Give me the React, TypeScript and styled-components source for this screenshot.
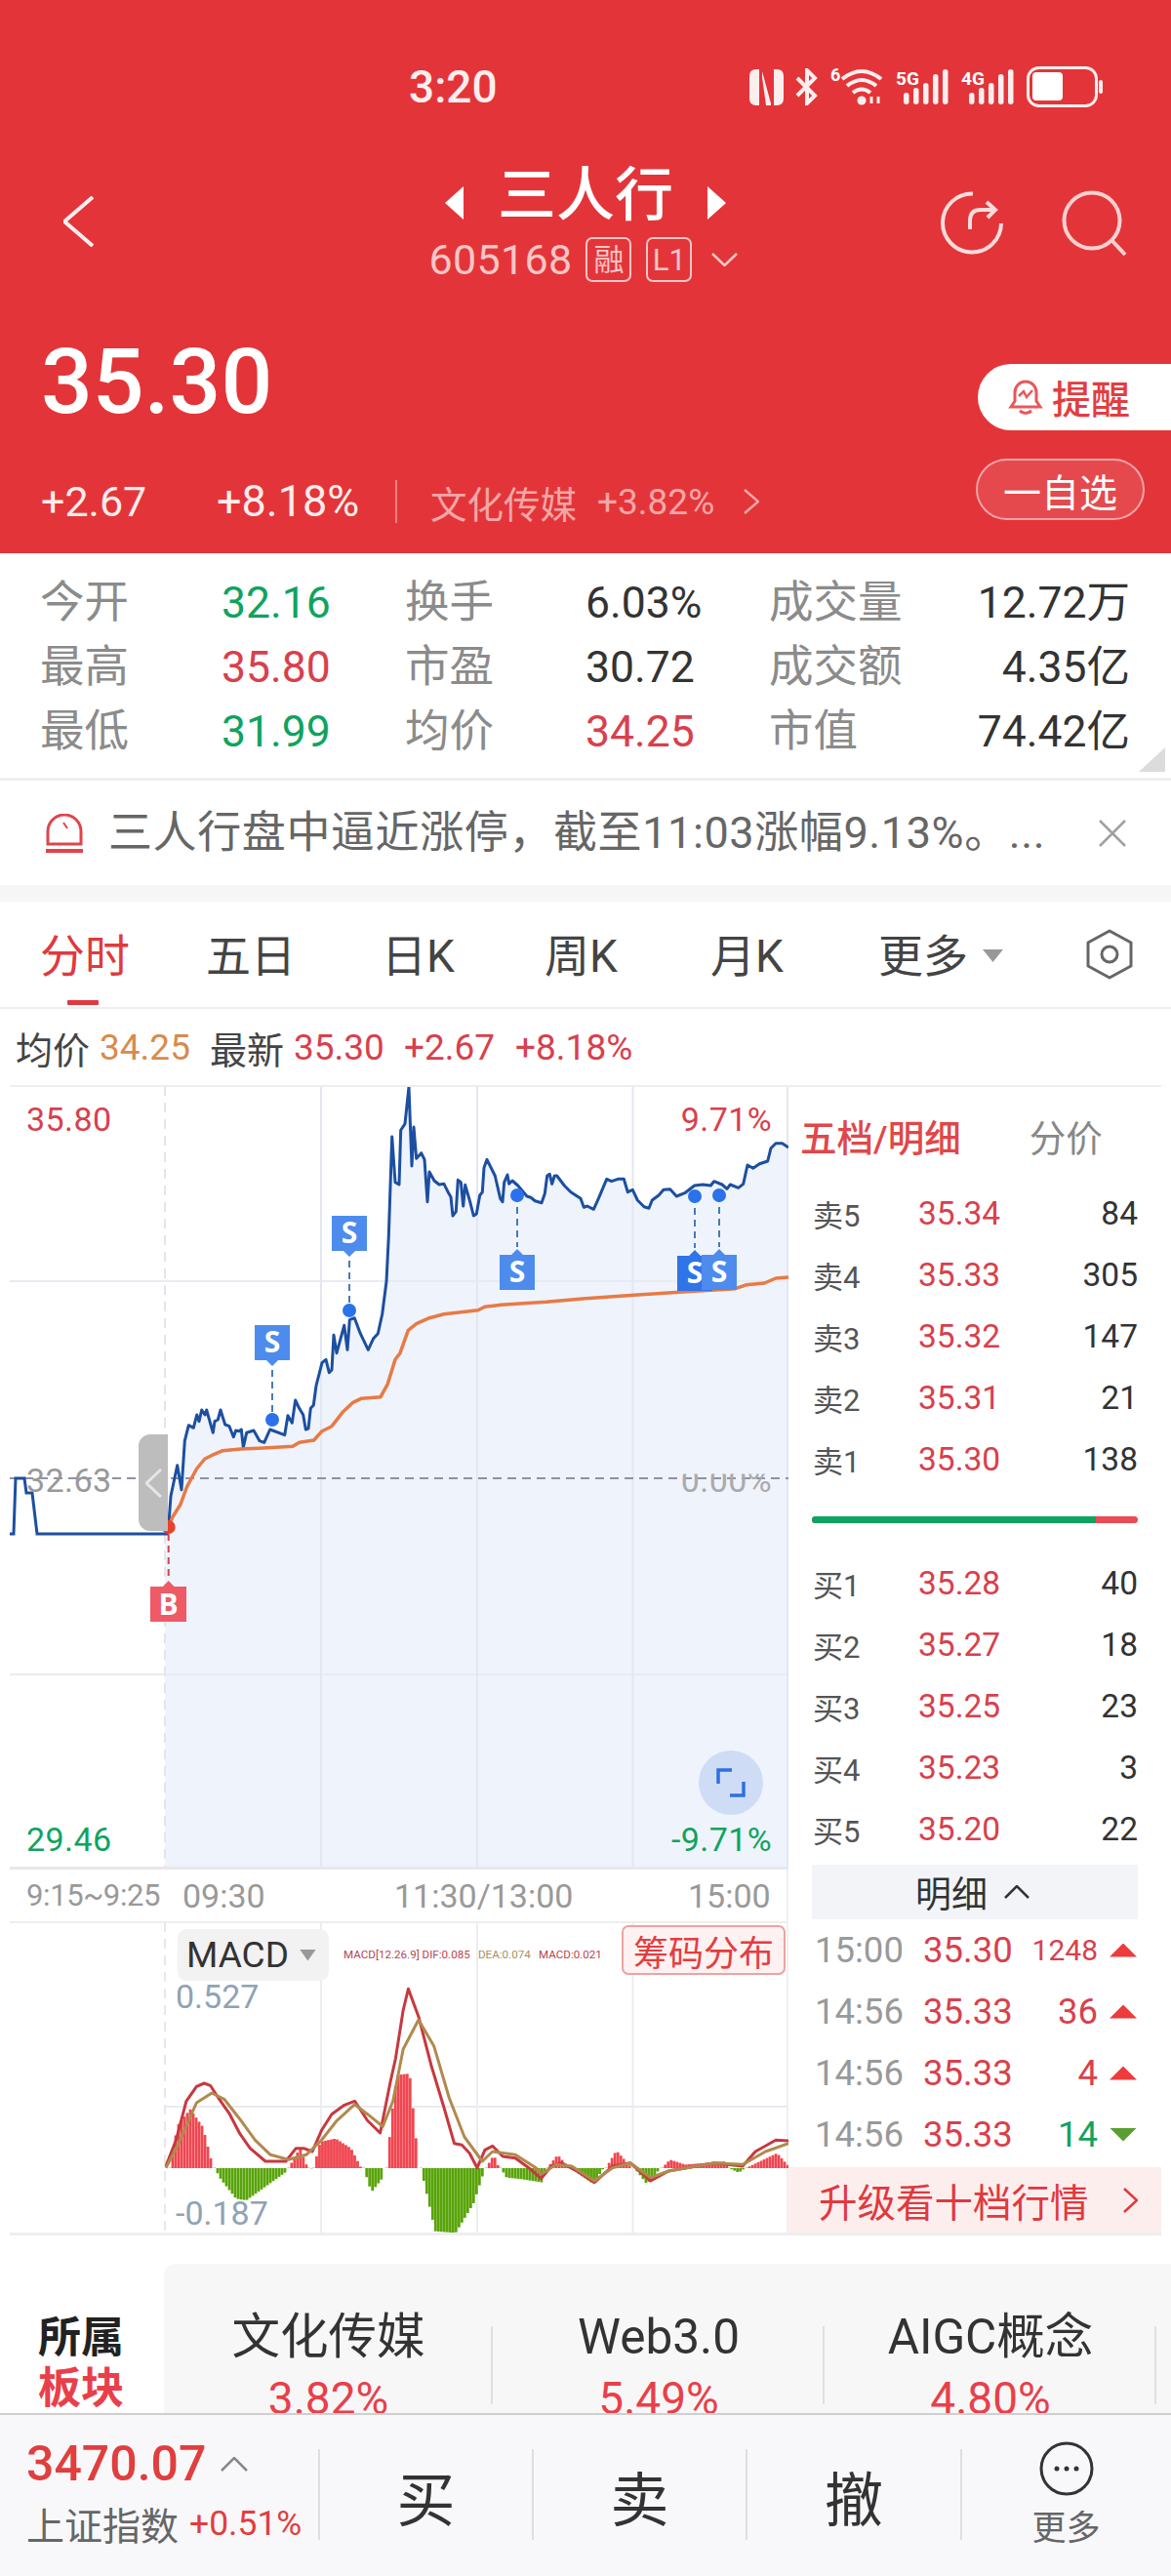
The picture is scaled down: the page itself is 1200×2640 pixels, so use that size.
import React from "react";
import styled, { createGlobalStyle } from "styled-components";

const FONT = `Roboto, "Noto Sans CJK SC", "Noto Sans", sans-serif`;
const RED = "#e0393e";
const TEXTRED = "#d8404c";
const GREEN = "#0fa35f";

const Global = createGlobalStyle`
  html, body { margin: 0; padding: 0; background: #fff; }
  * { box-sizing: border-box; }
`;

const Page = styled.div`
  width: 1200px; height: 2640px; overflow: hidden; background: #fff;
  display: flex; flex-direction: column; font-family: ${FONT}; color: #333;
`;

/* ---------- header ---------- */
const Header = styled.header`
  height: 567px; flex: none; background: #e33539; color: #fff; display: flex; flex-direction: column;
`;
const StatusBar = styled.div`
  height: 50px; margin-top: 64px; display: flex; align-items: center; padding: 0 70px 0 419px;
`;
const Clock = styled.div`font-size: 46px; line-height: 50px; font-weight: 500; color: #fdeeee;`;
const StatusIcons = styled.div`margin-left: auto; display: flex; align-items: center; gap: 12px;`;
const NavRow = styled.div`
  height: 226px; flex: none; display: grid; grid-template-columns: 1fr auto 1fr; align-items: center;
`;
const NavLeft = styled.div`padding-left: 65px; display: flex; align-items: center;`;
const NavRight = styled.div`padding: 3px 44px 0 0; display: flex; justify-content: flex-end; align-items: center; gap: 59px;`;
const NavCenter = styled.div`display: flex; flex-direction: column; align-items: center; padding-top: 5px;`;
const TitleRow = styled.div`display: flex; align-items: center; height: 70px; margin-top: -2px;`;
const Title = styled.h1`margin: 0 35px; font-size: 60px; line-height: 70px; font-weight: 500;`;
const Caret = styled.div<{ $dir: "l" | "r" }>`
  width: 19px; height: 34px; margin-top: 14px; background: #fff;
  clip-path: ${(p) => (p.$dir === "l" ? "polygon(100% 0, 100% 100%, 0 50%)" : "polygon(0 0, 100% 50%, 0 100%)")};
`;
const CodeRow = styled.div`display: flex; align-items: center; height: 50px; margin-top: 5px; margin-left: -4px; color: #f7c6c6;`;
const Code = styled.span`font-size: 43px; line-height: 50px; letter-spacing: .3px;`;
const Badge = styled.span<{ $ml: number }>`
  width: 47px; height: 46px; margin-left: ${(p) => p.$ml}px; border: 2px solid #f7c6c6; border-radius: 7px;
  display: flex; align-items: center; justify-content: center; font-size: 31px; line-height: 1;
`;
const ChevronSlot = styled.span`margin-left: 20px; display: flex;`;
const PriceArea = styled.div`flex: 1; display: flex; justify-content: space-between;`;
const PriceLeft = styled.div`padding-left: 42px; display: flex; flex-direction: column;`;
const BigPrice = styled.div`font-size: 93px; line-height: 100px; font-weight: 500; margin-top: 2px;`;
const SubRow = styled.div`margin-top: 47px; height: 50px; display: flex; align-items: center;`;
const SubVal = styled.span<{ $w: number; $fs?: number }>`
  width: ${(p) => p.$w}px; font-size: ${(p) => p.$fs || 43}px; line-height: 50px; color: #fdecec;
`;
const SubDivider = styled.span`width: 2px; height: 44px; background: #ee7f80; margin-right: 34px;`;
const SubLabel = styled.span`font-size: 37.5px; color: #f3a6a6; margin-right: 21px;`;
const SubPct = styled.span`font-size: 37px; color: #f3a6a6; margin-right: 30px;`;
const PriceRight = styled.div`display: flex; flex-direction: column; align-items: flex-end;`;
const RemindBtn = styled.div`
  margin-top: 33px; width: 198px; height: 68px; background: #fff; border-radius: 34px 0 0 34px; color: #e33d40;
  display: flex; align-items: center; padding-left: 31px; gap: 9px; font-size: 40px; font-weight: 500;
`;
const FavBtn = styled.div`
  margin-top: 29px; margin-right: 27px; width: 173px; height: 63px; border-radius: 32px;
  border: 2px solid rgba(255,255,255,.5); background: rgba(255,255,255,.1); color: #fff;
  display: flex; align-items: center; justify-content: center; font-size: 39px;
`;

/* ---------- stats ---------- */
const Stats = styled.section`
  position: relative; height: 233px; flex: none; padding-top: 18px; border-bottom: 3px solid #f0f0f0;
  &::after {
    content: ""; position: absolute; right: 6px; bottom: 6px; width: 27px; height: 25px; background: #dcdcdc;
    clip-path: polygon(100% 0, 100% 100%, 0 100%);
  }
`;
const StatRow = styled.div`
  height: 66px; padding: 0 42px 0 41px; display: grid; align-items: center;
  grid-template-columns: 186px 188px 185px 188px 1fr auto;
`;
const StatLabel = styled.span`font-size: 45.5px; line-height: 66px; color: #8b8b8b;`;
const StatVal = styled.span<{ $c?: string }>`font-size: 44.5px; line-height: 66px; color: ${(p) => p.$c || "#333"};`;

/* ---------- notice ---------- */
const Notice = styled.div`
  height: 107px; flex: none; display: flex; align-items: center; padding: 0 45px 0 46px;
`;
const NoticeText = styled.div`margin-left: 25px; flex: 1; font-size: 45px; line-height: 60px; color: #666; white-space: nowrap; letter-spacing: .6px;`;
const Band = styled.div`height: 17px; flex: none; background: #f6f6f6;`;

/* ---------- tabs ---------- */
const Tabs = styled.nav`
  height: 110px; flex: none; display: grid; align-items: center; border-bottom: 2px solid #eee; padding: 0 39px 0 41px;
  grid-template-columns: 170px 180px 167px 170px 172px 1fr auto;
`;
const Tab = styled.div<{ $on?: boolean }>`
  position: relative; font-size: 46px; line-height: 60px; color: ${(p) => (p.$on ? RED : "#444")};
  display: flex; align-items: center; padding-top: 3px;
  ${(p) => p.$on && `&::after { content: ""; position: absolute; left: 28px; width: 32px; height: 5px; top: 78px; background: ${RED}; border-radius: 1px; }`}
`;
const TabCaret = styled.span`
  width: 21px; height: 13px; margin-left: 15px; background: #999; clip-path: polygon(0 0, 100% 0, 50% 100%);
`;

/* ---------- info ---------- */
const InfoLine = styled.div`
  height: 78px; flex: none; padding-left: 16px; display: flex; align-items: center; font-size: 38px; color: #444;
`;
const InfoVal = styled.span<{ $c: string; $ml: number }>`color: ${(p) => p.$c}; margin-left: ${(p) => p.$ml}px; font-size: 37px;`;
const InfoZh = styled.span<{ $ml?: number }>`margin-left: ${(p) => p.$ml || 0}px;`;

/* ---------- body ---------- */
const Body = styled.div`
  margin: 0 10px; height: 1179px; flex: none; display: flex; border-top: 2px solid #eee; border-bottom: 3px solid #eee;
`;
const LeftCol = styled.div`width: 798px; flex: none; display: flex; flex-direction: column;`;
const ChartBox = styled.div`position: relative; height: 802px; flex: none; border-bottom: 3px solid #e8e8ec;`;
const ChartSvg = styled.svg`display: block;`;
const ChartLabel = styled.span<{ $c: string; $x?: number; $r?: number; $y: number }>`
  position: absolute; top: ${(p) => p.$y}px; font-size: 34px; line-height: 40px; letter-spacing: .4px; color: ${(p) => p.$c};
  ${(p) => (p.$x !== undefined ? `left: ${p.$x}px;` : "")}
  ${(p) => (p.$r !== undefined ? `right: ${p.$r}px;` : "")}
`;
const GhostLabel = styled(ChartLabel)`clip-path: inset(34% 0 0 0);`;
const Handle = styled.div`
  position: absolute; left: 132px; top: 356px; width: 30px; height: 99px; background: #bdbdbd; border-radius: 12px 0 0 12px;
  display: flex; align-items: center; justify-content: center;
`;
const ExpandBtn = styled.div`
  position: absolute; left: 706px; top: 680px; width: 66px; height: 66px; border-radius: 50%; background: #cfdcf5;
  display: flex; align-items: center; justify-content: center;
`;
const TimeAxis = styled.div`
  height: 55px; flex: none; border-bottom: 2px solid #eee; display: grid; align-items: center;
  padding-left: 17px; grid-template-columns: 160px 217px 301px 1fr; font-size: 34px; color: #999;
`;
const PreTime = styled.span`font-size: 31px; letter-spacing: -.4px;`;
const MacdBox = styled.div`position: relative; flex: 1;`;
const MacdPill = styled.div`
  position: absolute; left: 172px; top: 6px; width: 155px; height: 53px; background: #f2f2f2; border-radius: 9px;
  display: flex; align-items: center; padding-left: 9px; font-size: 37px; color: #333;
`;
const PillCaret = styled.span`width: 17px; height: 12px; margin-left: 11px; background: #999; clip-path: polygon(0 0, 100% 0, 50% 100%);`;
const MacdInfo = styled.span<{ $c: string; $x: number }>`
  position: absolute; left: ${(p) => p.$x}px; top: 22px; font-size: 11.6px; line-height: 20px; white-space: nowrap; color: ${(p) => p.$c};
`;
const ChipBtn = styled.div`
  position: absolute; left: 627px; top: 2px; width: 168px; height: 51px; border: 2px solid #eba3a3; background: #fdf1f1; border-radius: 7px;
  display: flex; align-items: center; justify-content: center; font-size: 36px; color: #e33d40;
`;
const MacdScale = styled.span<{ $y: number }>`
  position: absolute; left: 170px; top: ${(p) => p.$y}px; font-size: 34px; line-height: 40px; color: #8fa3b5;
`;

/* ---------- right panel ---------- */
const RightCol = styled.div`flex: 1; display: flex; flex-direction: column; border-left: 2px solid #f0f0f0; margin-left: -2px; min-width: 0;`;
const PanelHead = styled.div`height: 98px; flex: none; display: flex; align-items: center; padding-left: 12px;`;
const PanelTab = styled.span<{ $on?: boolean }>`
  font-size: 37.5px; color: ${(p) => (p.$on ? "#e0474a" : "#888")}; font-weight: ${(p) => (p.$on ? 500 : 400)};
  margin-left: ${(p) => (p.$on ? 0 : 70)}px;
`;
const QuoteRow = styled.div`
  height: 63px; flex: none; padding: 0 24px 0 25px; display: grid; grid-template-columns: 108px 1fr auto; align-items: center;
`;
const QuoteLabel = styled.span`font-size: 31px; color: #555;`;
const QuotePrice = styled.span`font-size: 33.5px; color: ${TEXTRED};`;
const QuoteQty = styled.span`font-size: 33.5px; color: #333;`;
const Ratio = styled.div`margin: 27px 24px 30px 24px; height: 7px; flex: none; border-radius: 4px; overflow: hidden; display: flex; background: #ea4b55;`;
const RatioFill = styled.div`background: ${GREEN}; height: 100%;`;
const DetailBar = styled.div`
  margin: 5px 24px 0 24px; height: 56px; flex: none; background: #f2f4f8; display: flex; align-items: center; padding-left: 106px;
  font-size: 37px; color: #333; gap: 17px;
`;
const DetailRow = styled.div`
  height: 63px; flex: none; padding: 0 25px 0 27px; display: grid; grid-template-columns: 111px 100px 1fr 40px; align-items: center;
`;
const DetailTime = styled.span`font-size: 36.5px; color: #999;`;
const DetailPrice = styled.span`font-size: 36.5px; color: ${TEXTRED};`;
const DetailQty = styled.span<{ $c: string; $small?: boolean }>`
  font-size: ${(p) => (p.$small ? 30 : 36.5)}px; color: ${(p) => p.$c}; text-align: right;
`;
const Arrow = styled.span<{ $up: boolean }>`
  justify-self: end; width: 28px; height: 14px; background: ${(p) => (p.$up ? "#ee3b3b" : "#5a9e32")};
  clip-path: ${(p) => (p.$up ? "polygon(50% 0, 100% 100%, 0 100%)" : "polygon(0 0, 100% 0, 50% 100%)")};
`;
const Upgrade = styled.div`
  margin-top: 2px; height: 67px; flex: none; background: #fdeeee; display: flex; align-items: center; padding: 0 24px 0 31px;
  justify-content: space-between; font-size: 39.5px; color: #e0393e;
`;

/* ---------- sector ---------- */
const Sector = styled.section`
  margin-top: 29px; height: 153px; flex: none; display: flex; overflow: hidden;
`;
const SectorTag = styled.div`
  width: 168px; flex: none; padding: 50px 0 0 39px; font-size: 44px; line-height: 52px; font-weight: 700; color: #222;
`;
const SectorTagRed = styled.div`color: #e8404a;`;
const SectorCard = styled.div`
  flex: 1; background: #f7f7f8; border-radius: 12px 0 0 0; display: grid; grid-template-columns: 337px 340px 340px 1fr;
`;
const SectorCell = styled.div`
  position: relative; text-align: center; padding-top: 45px;
  &::after { content: ""; position: absolute; right: 0; top: 64px; height: 80px; width: 2px; background: #e0e0e0; }
`;
const SectorName = styled.div`font-size: 49.5px; line-height: 60px; color: #333;`;
const SectorPct = styled.div`font-size: 46px; line-height: 56px; margin-top: 5px; color: #e8404a;`;

/* ---------- bottom bar ---------- */
const BottomBar = styled.footer`
  height: 167px; flex: none; background: #f8f8fa; border-top: 2px solid #cfcfcf;
  display: grid; grid-template-columns: 327px 219px 219px 220px 1fr;
`;
const IndexCell = styled.div`padding: 20px 0 0 27px; position: relative;`;
const IndexTop = styled.div`display: flex; align-items: center; height: 60px; font-size: 50px; font-weight: 500; color: #e13e3e;`;
const IndexChevron = styled.span`margin-left: 15px; display: flex;`;
const IndexBottom = styled.div`display: flex; align-items: center; height: 62px; font-size: 39px; color: #666;`;
const IndexPct = styled.span`font-size: 35.5px; color: #e13e3e; margin-left: 11px;`;
const TradeCell = styled.div`
  position: relative; display: flex; align-items: center; justify-content: center; font-size: 60px; color: #333; padding-top: 0;
  &::before { content: ""; position: absolute; left: -1px; top: 35px; height: 93px; width: 2px; background: #dedede; }
`;
const MoreCell = styled(TradeCell)`
  flex-direction: column; justify-content: flex-start; padding: 26px 0 0 0; font-size: 35px; color: #666; gap: 11px;
`;
const MoreText = styled.span`line-height: 44px;`;

/* ---------- data ---------- */
type P = [number, number];
const z9 = (a: P[]): P[] => a.map(([x, y]) => [160 + x / 3, 1100 + y / 3]);
const z10 = (a: P[]): P[] => a.map(([x, y]) => [400 + x / 3, 1100 + y / 3]);
const z5 = (a: P[]): P[] => a.map(([x, y]) => [x / 1.912, 1900 + y / 3]);
const toPath = (a: P[]) => "M" + a.map(([x, y]) => `${x.toFixed(1)} ${y.toFixed(1)}`).join("L");

const pre: P[] = [[10, 1572], [14, 1572], [16, 1515], [25, 1515], [27, 1530], [33, 1530], [38, 1572], [172.7, 1572]];
const blue: P[] = [
  ...z9([[38, 1395], [45, 1300], [65, 1205], [78, 1280], [88, 1130], [100, 1082], [115, 1090], [125, 1050], [132, 1070], [140, 1035], [150, 1050], [155, 1035], [175, 1105], [180, 1070], [190, 1065], [198, 1035], [212, 1080], [225, 1085], [238, 1118], [245, 1098], [255, 1100], [262, 1095], [268, 1150], [278, 1105], [300, 1098], [318, 1130], [332, 1135], [350, 1095], [395, 1112], [405, 1052], [418, 1075], [428, 1005], [440, 1030], [452, 1050], [460, 1095], [468, 1092], [475, 1030], [484, 1020], [492, 960], [510, 890], [522, 880], [532, 920], [540, 912], [546, 805], [555, 860], [578, 775], [588, 850], [595, 758], [610, 752], [628, 800], [652, 850], [668, 815], [682, 800], [695, 740], [708, 640], [715, 500], [725, 195], [735, 335], [747, 342], [752, 175], [765, 155], [777, 42], [786, 285], [792, 165], [800, 262], [815, 245], [825, 265], [834, 395], [840, 303], [855, 330], [870, 342], [885, 340], [900, 370], [906, 380], [912, 438], [922, 425], [928, 328], [937, 335], [944, 408], [950, 343], [965, 395], [976, 438], [985, 432], [995, 375], [1003, 365], [1008, 290], [1017, 265], [1042, 315], [1058, 385], [1065, 395], [1070, 335], [1080, 312], [1085, 340], [1095, 330], [1112, 345]]),
  ...z10([[420, 378], [432, 382], [445, 392], [465, 398], [475, 370], [482, 315], [490, 310], [497, 340], [505, 315], [512, 315], [535, 345], [555, 365], [585, 385], [595, 412], [605, 408], [625, 418], [640, 385], [665, 325], [680, 332], [700, 325], [718, 325], [730, 365], [745, 358], [760, 390], [780, 410], [795, 415], [805, 390], [825, 375], [840, 358], [860, 356], [880, 378], [905, 368], [935, 345], [960, 342], [985, 345], [995, 332], [1020, 342], [1035, 355], [1045, 342], [1070, 352], [1085, 340], [1098, 282], [1115, 292], [1135, 278], [1160, 270], [1170, 230], [1185, 215], [1205, 215], [1224, 228]]),
];
const avg: P[] = [
  ...z9([[38, 1395], [50, 1365], [75, 1325], [95, 1270], [125, 1215], [150, 1185], [170, 1175], [205, 1160], [260, 1155], [330, 1152], [420, 1147], [440, 1135], [485, 1128], [510, 1100], [540, 1085], [575, 1040], [605, 1012], [630, 1000], [690, 995], [712, 955], [735, 880], [750, 860], [775, 790], [800, 770], [840, 752], [885, 740], [990, 728], [1010, 718], [1060, 712], [1200, 703]]),
  ...z10([[600, 692], [750, 682], [900, 672], [1060, 662], [1095, 650], [1150, 645], [1185, 630], [1224, 627]]),
];
const fillPath = toPath([[169, 1915], [169, 1572], ...blue, [808, 1915]]) + "Z";

const dif = z5([[325, 960], [345, 880], [365, 760], [385, 715], [400, 705], [412, 712], [430, 755], [450, 800], [470, 860], [490, 905], [520, 945], [560, 945], [580, 905], [595, 905], [612, 915], [630, 850], [650, 800], [675, 772], [695, 760], [720, 820], [745, 858], [765, 700], [775, 630], [790, 480], [800, 415], [820, 500], [845, 650], [870, 780], [890, 890], [905, 895], [920, 920], [935, 965], [950, 910], [965, 898], [985, 930], [1010, 935], [1040, 970], [1060, 998], [1080, 960], [1100, 950], [1130, 975], [1165, 1010], [1200, 960], [1235, 950], [1275, 1005], [1310, 975], [1400, 950], [1455, 960], [1480, 915], [1520, 880], [1545, 882]]);
const dea = z5([[325, 965], [350, 890], [385, 765], [415, 735], [440, 755], [470, 815], [500, 880], [530, 925], [565, 940], [600, 925], [630, 880], [660, 820], [695, 770], [720, 800], [750, 838], [770, 760], [790, 600], [820, 510], [850, 590], [880, 750], [910, 870], [945, 945], [965, 915], [1010, 925], [1050, 965], [1060, 985], [1090, 955], [1120, 960], [1165, 1005], [1200, 965], [1235, 950], [1275, 995], [1310, 975], [1400, 950], [1455, 955], [1500, 915], [1545, 890]]);

const segs: { r: boolean; p: P[] }[] = [
  { r: true, p: [[330, 965], [345, 835], [370, 785], [395, 840], [415, 965]] },
  { r: false, p: [[418, 965], [430, 1000], [460, 1060], [480, 1065], [520, 1020], [560, 975]] },
  { r: true, p: [[563, 965], [585, 905], [600, 965]] },
  { r: false, p: [[602, 965], [606, 980], [608, 965]] },
  { r: true, p: [[612, 965], [625, 885], [655, 875], [685, 905], [705, 965]] },
  { r: false, p: [[710, 965], [725, 1040], [745, 1000], [750, 965]] },
  { r: true, p: [[755, 965], [765, 800], [775, 680], [800, 675], [818, 965]] },
  { r: false, p: [[822, 965], [850, 1160], [890, 1165], [925, 1075], [948, 965]] },
  { r: true, p: [[950, 965], [965, 925], [975, 965]] },
  { r: false, p: [[978, 965], [990, 995], [1020, 1000], [1060, 1010], [1068, 965]] },
  { r: true, p: [[1070, 965], [1090, 925], [1112, 965]] },
  { r: false, p: [[1115, 965], [1160, 1015], [1180, 965]] },
  { r: true, p: [[1185, 965], [1205, 912], [1235, 965]] },
  { r: false, p: [[1240, 965], [1265, 1015], [1292, 965]] },
  { r: true, p: [[1295, 965], [1310, 940], [1340, 955], [1420, 945], [1425, 965]] },
  { r: false, p: [[1425, 965], [1445, 980], [1458, 965]] },
  { r: true, p: [[1460, 965], [1520, 920], [1545, 965]] },
];
const bars = segs.flatMap((s, si) => {
  const pts = z5(s.p);
  const out: React.ReactElement[] = [];
  let n = 0;
  for (let x = pts[0][0]; x <= pts[pts.length - 1][0]; x += 3, n++) {
    let i = 0;
    while (i < pts.length - 2 && pts[i + 1][0] < x) i++;
    const [x0, y0] = pts[i];
    const [x1, y1] = pts[i + 1];
    const y = y0 + ((y1 - y0) * (x - x0)) / (x1 - x0 || 1);
    const base = 2222;
    out.push(
      <rect key={`${si}-${n}`} x={x} y={Math.min(y, base)} width={2.8} height={Math.abs(y - base)} fill={s.r ? "#f04650" : "#58a40a"} />
    );
  }
  return out;
});

const Marker = ({ x, y, up, dotY, c, letter = "S", dash = "#4a7ab5" }: { x: number; y: number; up: boolean; dotY: number; c: string; letter?: string; dash?: string }) => {
  const l = x - 18, r = x + 18, b = y + 36;
  const d = up
    ? `M${l} ${y}H${x - 6}L${x} ${y - 6}L${x + 6} ${y}H${r}V${b}H${l}Z`
    : `M${l} ${y}H${r}V${b}H${x + 6}L${x} ${b + 6}L${x - 6} ${b}H${l}Z`;
  return (
    <g>
      <line x1={x} x2={x} y1={up ? dotY : b + 10} y2={up ? y - 8 : dotY} stroke={dash} strokeWidth={2} strokeDasharray="7 5" />
      <circle cx={x} cy={dotY} r={7} fill="#2b72ea" />
      <path d={d} fill={c} />
      <text x={x} y={y + 28} textAnchor="middle" fontFamily="'Open Sans', sans-serif" fontWeight={700} fontSize={30} fill="#fff">{letter}</text>
    </g>
  );
};

const asks: [string, string, string][] = [["卖5", "35.34", "84"], ["卖4", "35.33", "305"], ["卖3", "35.32", "147"], ["卖2", "35.31", "21"], ["卖1", "35.30", "138"]];
const bids: [string, string, string][] = [["买1", "35.28", "40"], ["买2", "35.27", "18"], ["买3", "35.25", "23"], ["买4", "35.23", "3"], ["买5", "35.20", "22"]];
const trades: { t: string; p: string; q: string; up: boolean; small?: boolean }[] = [
  { t: "15:00", p: "35.30", q: "1248", up: true, small: true },
  { t: "14:56", p: "35.33", q: "36", up: true },
  { t: "14:56", p: "35.33", q: "4", up: true },
  { t: "14:56", p: "35.33", q: "14", up: false },
];

const Chevron = ({ dir, w, h, c, sw = 3 }: { dir: "l" | "r" | "u" | "d"; w: number; h: number; c: string; sw?: number }) => {
  const pts = { l: `${w - 1} 1 1 ${h / 2} ${w - 1} ${h - 1}`, r: `1 1 ${w - 1} ${h / 2} 1 ${h - 1}`, u: `1 ${h - 1} ${w / 2} 1 ${w - 1} ${h - 1}`, d: `1 1 ${w / 2} ${h - 1} ${w - 1} 1` }[dir];
  return <svg width={w} height={h} viewBox={`0 0 ${w} ${h}`} fill="none"><polyline points={pts} stroke={c} strokeWidth={sw} /></svg>;
};

const SignalIcon = ({ label }: { label: string }) => (
  <svg width={55} height={38} viewBox="0 0 55 38">
    <text x={0} y={17} fontFamily="Roboto, sans-serif" fontWeight={700} fontSize={19} fill="#fff">{label}</text>
    {[[8, 24, 12], [18, 19, 17], [28, 14, 22], [38, 5, 31], [48, 0, 36]].map(([x, y, h]) => (
      <rect key={x} x={x} y={y + 1} width={5.5} height={h} rx={2.7} fill="#fdeeee" />
    ))}
  </svg>
);

export default function App() {
  return (
    <Page>
      <Global />
      <Header>
        <StatusBar>
          <Clock>3:20</Clock>
          <StatusIcons>
            <svg width={35} height={37} viewBox="0 0 35 37">
              <path d="M7 0H10V37H7Q0 37 0 30V7Q0 0 7 0ZM25 0H28Q35 0 35 7V30Q35 37 28 37H25ZM13 2L22 35V37H17L13 8Z" fill="#fdeeee" />
            </svg>
            <svg width={24} height={38} viewBox="0 0 24 38" fill="none">
              <path d="M2 10L20 28L12 36V2L20 10L2 28" stroke="#fdeeee" strokeWidth={4} />
            </svg>
            <svg width={55} height={40} viewBox="0 0 55 40" fill="none">
              <text x={0} y={14} fontFamily="Roboto, sans-serif" fontWeight={700} fontSize={18} fill="#fff">6</text>
              <path d="M12 12Q32 -4 52 12" stroke="#fdeeee" strokeWidth={4} />
              <path d="M17 19Q32 7 47 19" stroke="#fdeeee" strokeWidth={4} />
              <path d="M23 26Q32 19 41 26" stroke="#fdeeee" strokeWidth={4} />
              <circle cx={32} cy={34} r={4.5} fill="#fdeeee" />
              <path d="M42 37V30M49 37V30" stroke="#fdeeee" strokeWidth={3} />
            </svg>
            <SignalIcon label="5G" />
            <SignalIcon label="4G" />
            <svg width={78} height={42} viewBox="0 0 78 42" fill="none">
              <rect x={1.5} y={1.5} width={70} height={39} rx={11} stroke="#fdeeee" strokeWidth={3} />
              <rect x={6} y={6} width={31} height={29} rx={4} fill="#fff" />
              <rect x={74} y={14} width={4} height={14} rx={2} fill="#fdeeee" />
            </svg>
          </StatusIcons>
        </StatusBar>
        <NavRow>
          <NavLeft><Chevron dir="l" w={31} h={52} c="#fdeeee" sw={4} /></NavLeft>
          <NavCenter>
            <TitleRow>
              <Caret $dir="l" />
              <Title>三人行</Title>
              <Caret $dir="r" />
            </TitleRow>
            <CodeRow>
              <Code>605168</Code>
              <Badge $ml={14}>融</Badge>
              <Badge $ml={15}>L1</Badge>
              <ChevronSlot><Chevron dir="d" w={27} h={14} c="#f7c6c6" sw={2.5} /></ChevronSlot>
            </CodeRow>
          </NavCenter>
          <NavRight>
            <svg width={66} height={66} viewBox="-1 -1 66 66" fill="none" stroke="#fbdcdc" strokeWidth={4}>
              <path d="M33 1.5A30 30 0 1 0 62 32" />
              <path d="M30 38V29Q30 18 41 18H55M47 10L56 18L48 26" />
            </svg>
            <svg width={68} height={68} viewBox="0 0 68 68" fill="none" stroke="#fbd0d0" strokeWidth={4}>
              <circle cx={31} cy={31} r={28.5} />
              <path d="M52 52L65 66" />
            </svg>
          </NavRight>
        </NavRow>
        <PriceArea>
          <PriceLeft>
            <BigPrice>35.30</BigPrice>
            <SubRow>
              <SubVal $w={180}>+2.67</SubVal>
              <SubVal $w={183} $fs={45}>+8.18%</SubVal>
              <SubDivider />
              <SubLabel>文化传媒</SubLabel>
              <SubPct>+3.82%</SubPct>
              <Chevron dir="r" w={16} h={26} c="#f3a6a6" sw={2.5} />
            </SubRow>
          </PriceLeft>
          <PriceRight>
            <RemindBtn>
              <svg width={36} height={38} viewBox="0 0 36 38" fill="none" stroke="#e8585b" strokeWidth={3}>
                <path d="M3 29H33L29 23V14A11 11 0 0 0 7 14V23Z" />
                <path d="M12 33Q18 38 24 33" />
                <path d="M11 18L16 13L19 19L25 12" strokeWidth={2.5} />
              </svg>
              提醒
            </RemindBtn>
            <FavBtn>一自选</FavBtn>
          </PriceRight>
        </PriceArea>
      </Header>

      <Stats>
        <StatRow>
          <StatLabel>今开</StatLabel><StatVal $c={GREEN}>32.16</StatVal>
          <StatLabel>换手</StatLabel><StatVal>6.03%</StatVal>
          <StatLabel>成交量</StatLabel><StatVal>12.72万</StatVal>
        </StatRow>
        <StatRow>
          <StatLabel>最高</StatLabel><StatVal $c={TEXTRED}>35.80</StatVal>
          <StatLabel>市盈</StatLabel><StatVal>30.72</StatVal>
          <StatLabel>成交额</StatLabel><StatVal>4.35亿</StatVal>
        </StatRow>
        <StatRow>
          <StatLabel>最低</StatLabel><StatVal $c={GREEN}>31.99</StatVal>
          <StatLabel>均价</StatLabel><StatVal $c={TEXTRED}>34.25</StatVal>
          <StatLabel>市值</StatLabel><StatVal>74.42亿</StatVal>
        </StatRow>
      </Stats>

      <Notice>
        <svg width={40} height={40} viewBox="0 0 40 40" fill="none" stroke="#e0444a" strokeWidth={3}>
          <path d="M3 31V18A17 17 0 0 1 37 18V31Z" />
          <path d="M19 9L23 15" strokeWidth={2} />
          <path d="M1 38H39" strokeWidth={4} />
        </svg>
        <NoticeText>{"三人行盘中逼近涨停\uFF0C截至11:03涨幅9.13%。..."}</NoticeText>
        <svg width={30} height={30} viewBox="0 0 30 30" stroke="#a0a0a0" strokeWidth={2.5}><path d="M2 2L28 28M28 2L2 28" /></svg>
      </Notice>
      <Band />

      <Tabs>
        <Tab $on>分时</Tab>
        <Tab>五日</Tab>
        <Tab>日K</Tab>
        <Tab>周K</Tab>
        <Tab>月K</Tab>
        <Tab>更多<TabCaret /></Tab>
        <svg width={48} height={52} viewBox="0 0 48 52" fill="none" stroke="#666" strokeWidth={3}>
          <path d="M24 2L46 14V38L24 50L2 38V14Z" strokeLinejoin="round" />
          <circle cx={24} cy={26} r={8} />
        </svg>
      </Tabs>

      <InfoLine>
        <InfoZh>均价</InfoZh>
        <InfoVal $c="#d98a4c" $ml={10}>34.25</InfoVal>
        <InfoZh $ml={20}>最新</InfoZh>
        <InfoVal $c={TEXTRED} $ml={10}>35.30</InfoVal>
        <InfoVal $c={TEXTRED} $ml={20}>+2.67</InfoVal>
        <InfoVal $c={TEXTRED} $ml={21}>+8.18%</InfoVal>
      </InfoLine>

      <Body>
        <LeftCol>
          <ChartBox>
            <ChartSvg width={798} height={799} viewBox="10 1114 798 799" fill="none">
              <path d={fillPath} fill="#eff3fc" />
              {[1313, 1716].map((y) => <line key={y} x1={10} x2={808} y1={y} y2={y} stroke="#e8ebf2" strokeWidth={2} />)}
              {[329, 489, 648.5, 807].map((x) => <line key={x} x1={x} x2={x} y1={1113} y2={1915} stroke="#e4e7f1" strokeWidth={2} />)}
              <line x1={169} x2={169} y1={1113} y2={1915} stroke="#e4e4ea" strokeWidth={2} strokeDasharray="10 7" />
              <line x1={10} x2={808} y1={1515} y2={1515} stroke="#8e93a3" strokeWidth={2} strokeDasharray="9 6" />
              <path d={toPath(pre)} stroke="#1c4fa0" strokeWidth={3} />
              <path d={toPath(blue)} stroke="#1c4fa0" strokeWidth={3} strokeLinejoin="round" />
              <path d={toPath(avg)} stroke="#e87a45" strokeWidth={3.5} strokeLinejoin="round" />
              <Marker x={279} y={1358} up={false} dotY={1455} c="#4d8ced" />
              <Marker x={358} y={1246} up={false} dotY={1343} c="#4d8ced" />
              <Marker x={530} y={1286} up dotY={1225} c="#4d8ced" />
              <Marker x={712} y={1287} up dotY={1226} c="#2f74e8" />
              <Marker x={737} y={1286} up dotY={1225} c="#4d8ced" />
              <line x1={172.7} x2={172.7} y1={1572} y2={1618} stroke="#d8404c" strokeWidth={2} strokeDasharray="7 5" />
              <circle cx={172.7} cy={1565} r={7} fill="#e8412f" />
              <path d="M154 1626H167L172.7 1620L178.5 1626H191V1662H154Z" fill="#ee5a65" />
              <text x={172.7} y={1655} textAnchor="middle" fontFamily="'Open Sans', sans-serif" fontWeight={700} fontSize={30} fill="#fff">B</text>
            </ChartSvg>
            <ChartLabel $c={TEXTRED} $x={17} $y={13}>35.80</ChartLabel>
            <ChartLabel $c={TEXTRED} $r={17} $y={13}>9.71%</ChartLabel>
            <ChartLabel $c="#999" $x={17} $y={383}>32.63</ChartLabel>
            <GhostLabel $c="#aaa" $r={17} $y={383}>0.00%</GhostLabel>
            <ChartLabel $c={GREEN} $x={17} $y={751}>29.46</ChartLabel>
            <ChartLabel $c={GREEN} $r={17} $y={751}>-9.71%</ChartLabel>
            <Handle><Chevron dir="l" w={17} h={30} c="#e6e6e6" sw={3} /></Handle>
            <ExpandBtn>
              <svg width={30} height={30} viewBox="0 0 30 30" fill="none" stroke="#2f6fe0" strokeWidth={3.5}>
                <path d="M2 16V2H16M28 14V28H14" />
              </svg>
            </ExpandBtn>
          </ChartBox>
          <TimeAxis>
            <PreTime>9:15~9:25</PreTime>
            <span>09:30</span>
            <span>11:30/13:00</span>
            <span>15:00</span>
          </TimeAxis>
          <MacdBox>
            <ChartSvg width={798} height={317} viewBox="10 1971 798 317" fill="none">
              <line x1={169} x2={808} y1={2159} y2={2159} stroke="#e8ebf2" strokeWidth={2} />
              {[329, 489, 648.5].map((x) => <line key={x} x1={x} x2={x} y1={1970} y2={2288} stroke="#ebedf3" strokeWidth={2} />)}
              <line x1={169} x2={169} y1={1970} y2={2288} stroke="#e8e8ec" strokeWidth={2} strokeDasharray="10 7" />
              {bars}
              <path d={toPath(dif)} stroke="#c8383f" strokeWidth={3} strokeLinejoin="round" />
              <path d={toPath(dea)} stroke="#b08a4e" strokeWidth={3} strokeLinejoin="round" />
            </ChartSvg>
            <MacdPill>MACD<PillCaret /></MacdPill>
            <MacdInfo $c="#b8454f" $x={342}>MACD[12.26.9] DIF:0.085</MacdInfo>
            <MacdInfo $c="#a89060" $x={480}>DEA:0.074</MacdInfo>
            <MacdInfo $c="#b8454f" $x={542}>MACD:0.021</MacdInfo>
            <ChipBtn>筹码分布</ChipBtn>
            <MacdScale $y={55}>0.527</MacdScale>
            <MacdScale $y={277}>-0.187</MacdScale>
          </MacdBox>
        </LeftCol>
        <RightCol>
          <PanelHead>
            <PanelTab $on>五档/明细</PanelTab>
            <PanelTab>分价</PanelTab>
          </PanelHead>
          {asks.map(([a, b, c]) => <QuoteRow key={a}><QuoteLabel>{a}</QuoteLabel><QuotePrice>{b}</QuotePrice><QuoteQty>{c}</QuoteQty></QuoteRow>)}
          <Ratio><RatioFill style={{ width: "87%" }} /></Ratio>
          {bids.map(([a, b, c]) => <QuoteRow key={a}><QuoteLabel>{a}</QuoteLabel><QuotePrice>{b}</QuotePrice><QuoteQty>{c}</QuoteQty></QuoteRow>)}
          <DetailBar>明细<Chevron dir="u" w={26} h={14} c="#333" sw={2.5} /></DetailBar>
          {trades.map((t, i) => (
            <DetailRow key={i}>
              <DetailTime>{t.t}</DetailTime>
              <DetailPrice>{t.p}</DetailPrice>
              <DetailQty $c={t.up ? TEXTRED : GREEN} $small={t.small}>{t.q}</DetailQty>
              <Arrow $up={t.up} />
            </DetailRow>
          ))}
          <Upgrade>升级看十档行情<Chevron dir="r" w={15} h={26} c="#e0393e" sw={2.5} /></Upgrade>
        </RightCol>
      </Body>

      <Sector>
        <SectorTag>所属<SectorTagRed>板块</SectorTagRed></SectorTag>
        <SectorCard>
          <SectorCell><SectorName>文化传媒</SectorName><SectorPct>3.82%</SectorPct></SectorCell>
          <SectorCell><SectorName>Web3.0</SectorName><SectorPct>5.49%</SectorPct></SectorCell>
          <SectorCell><SectorName>AIGC概念</SectorName><SectorPct>4.80%</SectorPct></SectorCell>
        </SectorCard>
      </Sector>

      <BottomBar>
        <IndexCell>
          <IndexTop>3470.07<IndexChevron><Chevron dir="u" w={28} h={15} c="#888" sw={2.5} /></IndexChevron></IndexTop>
          <IndexBottom>上证指数<IndexPct>+0.51%</IndexPct></IndexBottom>
        </IndexCell>
        <TradeCell>买</TradeCell>
        <TradeCell>卖</TradeCell>
        <TradeCell>撤</TradeCell>
        <MoreCell>
          <svg width={56} height={58} viewBox="0 0 56 58" fill="none">
            <circle cx={28} cy={29} r={26} stroke="#333" strokeWidth={3} />
            <circle cx={18} cy={29} r={2.5} fill="#333" /><circle cx={28} cy={29} r={2.5} fill="#333" /><circle cx={38} cy={29} r={2.5} fill="#333" />
          </svg>
          <MoreText>更多</MoreText>
        </MoreCell>
      </BottomBar>
    </Page>
  );
}
